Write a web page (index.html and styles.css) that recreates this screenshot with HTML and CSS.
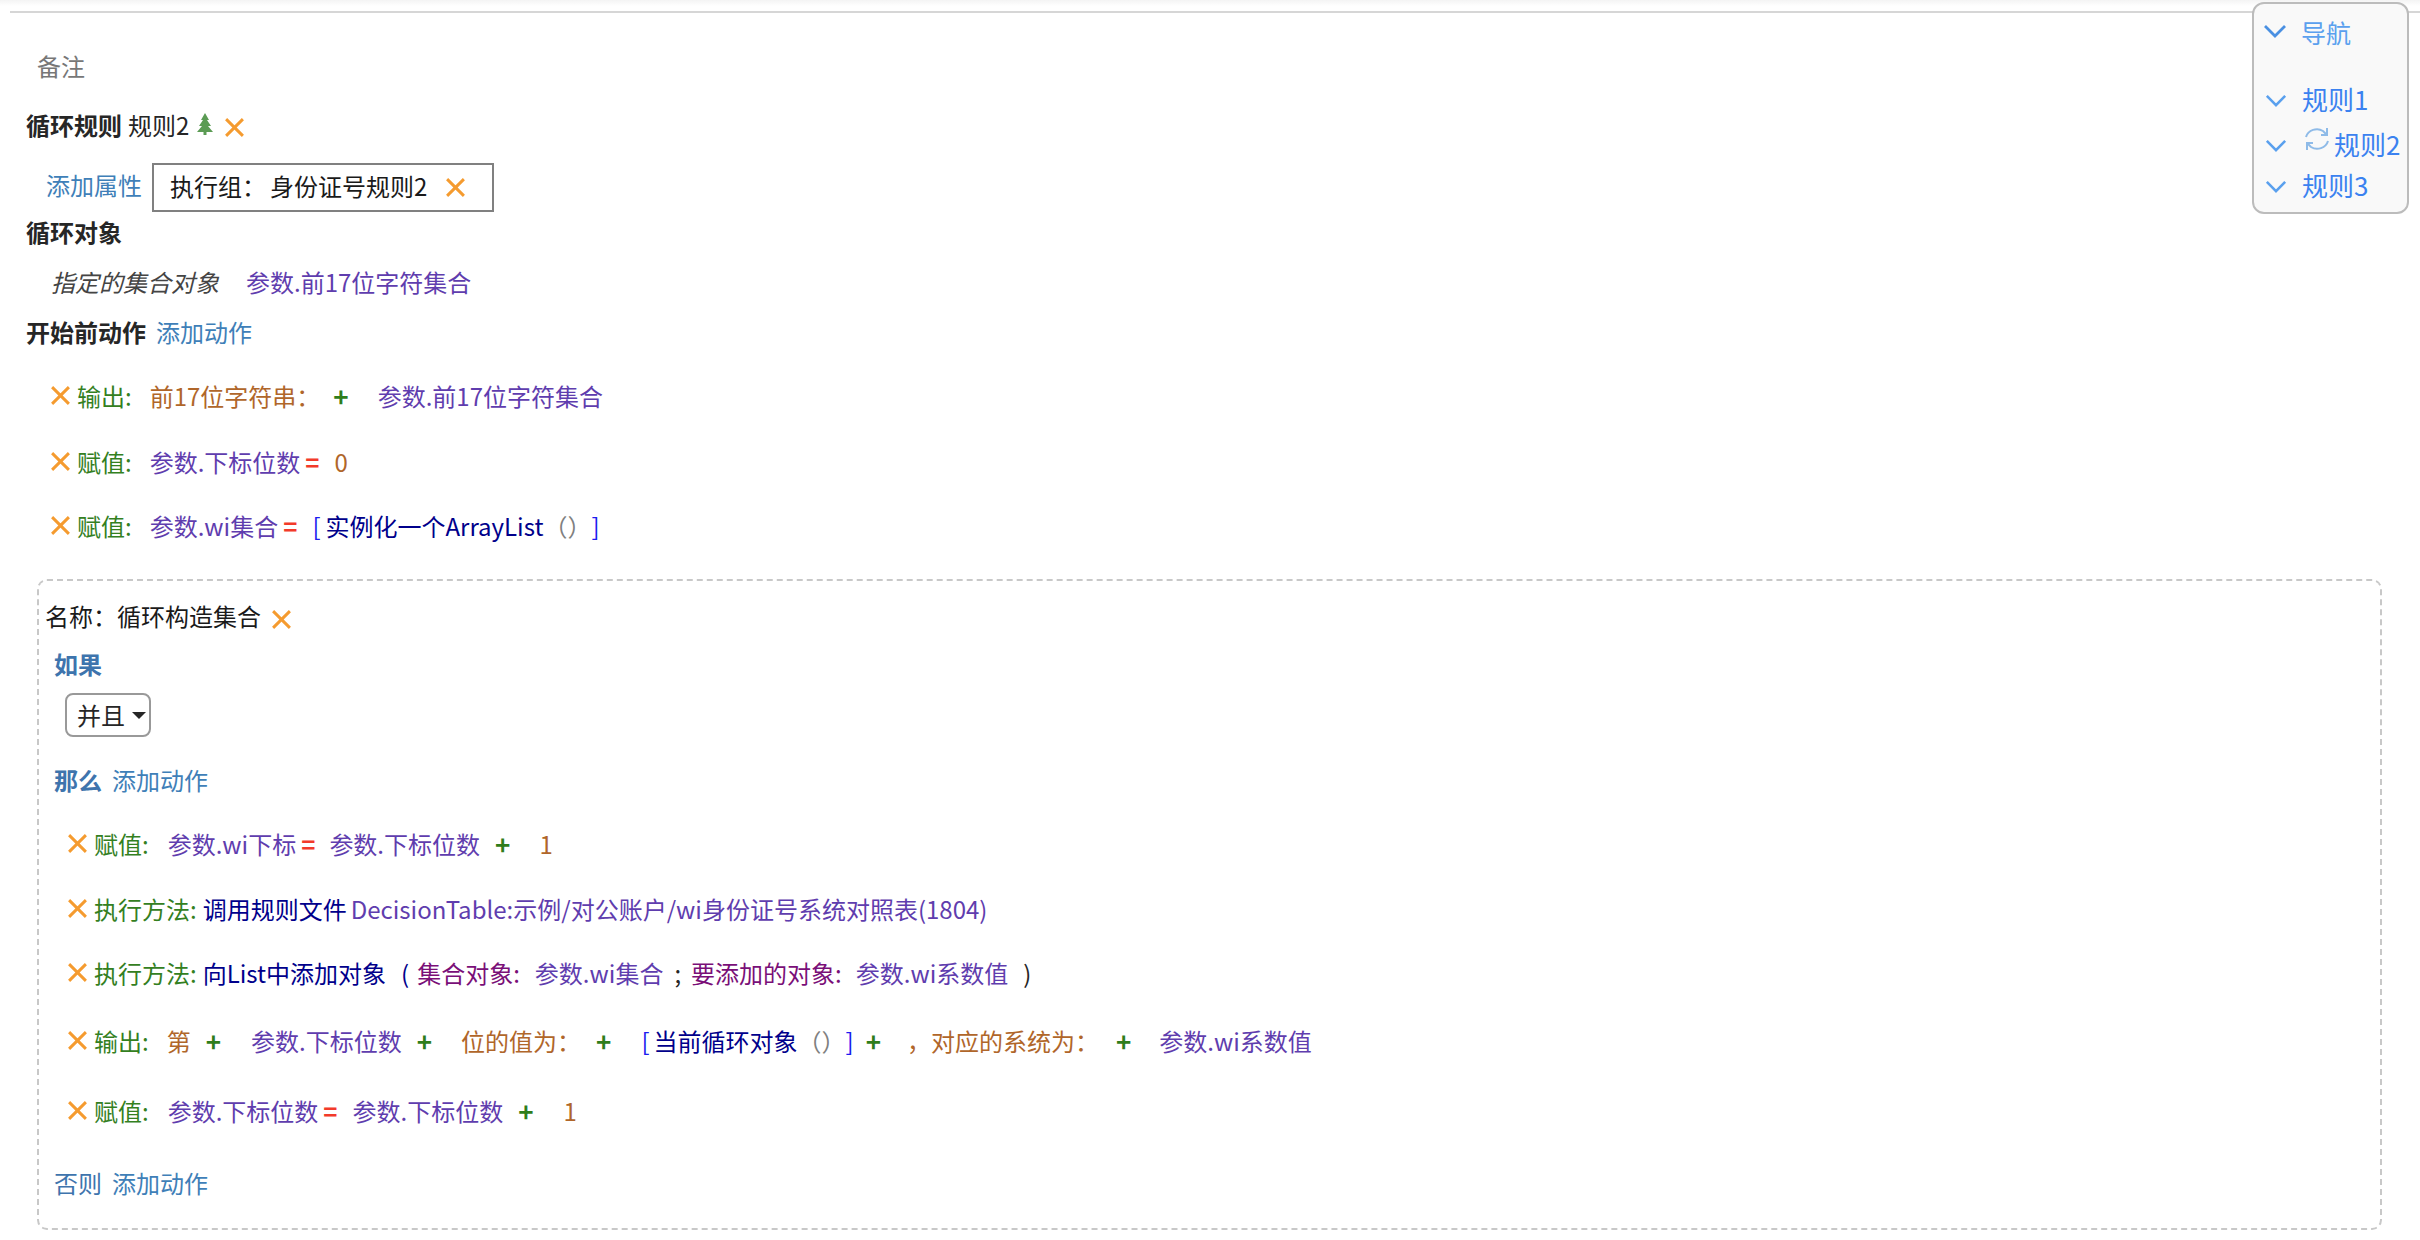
FILE: index.html
```html
<!DOCTYPE html>
<html lang="zh-CN">
<head>
<meta charset="utf-8">
<title>循环规则</title>
<link rel="stylesheet" href="styles.css">
</head>
<body>
<svg class="defs" width="0" height="0" aria-hidden="true">
  <symbol id="x" viewBox="0 0 20 18"><path d="M2 1 18 17M18 1 2 17" fill="none" stroke="currentColor" stroke-width="2.8"/></symbol>
  <symbol id="chev" viewBox="0 0 24 14"><path d="M2 2 12 12 22 2" fill="none" stroke="currentColor" stroke-width="2.8"/></symbol>
</svg>
<div class="topshade"></div>
<div class="rule"></div>
<nav class="nav">
  <div class="nav-head"><svg class="chev-l"><use href="#chev"/></svg><span>导航</span></div>
  <div class="nav-item first"><svg class="chev"><use href="#chev"/></svg><span>规则1</span></div>
  <div class="nav-item second"><svg class="chev"><use href="#chev"/></svg>
    <svg class="sync" viewBox="0 0 26 26"><path d="M2 11C4 4 13 1 19 5L23 9M23 2V9H17M24 15C22 22 13 25 7 21L3 17M3 24V17H9" fill="none" stroke="#8fbbe8" stroke-width="2"/></svg>
    <span>规则2</span></div>
  <div class="nav-item third"><svg class="chev"><use href="#chev"/></svg><span>规则3</span></div>
</nav>
<main class="page">
  <div class="row note">备注</div>
  <div class="row title"><b>循环规则</b><span class="ml6">规则2</span>
    <svg class="tree" viewBox="0 0 18 22"><path d="M9 0 13 7H11L15 13H12L17 19H10.500V22H7.500V19H1L6 13H3L7 7H5Z" fill="#5b9b54"/></svg>
    <svg class="x title-x"><use href="#x"/></svg></div>
  <div class="row attrs"><a class="link attr-link">添加属性</a>
    <div class="attr-box"><span>执行组：</span><span class="ml4">身份证号规则2</span><svg class="x ml18"><use href="#x"/></svg></div></div>
  <div class="row loop-obj"><b>循环对象</b></div>
  <div class="row target"><i class="hint">指定的集合对象</i><span class="var ml27">参数.前17位字符集合</span></div>
  <div class="row before"><b>开始前动作</b><a class="link ml10">添加动作</a></div>

  <div class="row act a30"><svg class="x"><use href="#x"/></svg><span class="kw">输出:</span><span class="str ml18">前17位字符串：</span><span class="op ml13">+</span><span class="var ml29">参数.前17位字符集合</span></div>
  <div class="row act a32"><svg class="x"><use href="#x"/></svg><span class="kw">赋值:</span><span class="var ml18">参数.下标位数</span><span class="eq">=</span><span class="str ml15">0</span></div>
  <div class="row act a30"><svg class="x"><use href="#x"/></svg><span class="kw">赋值:</span><span class="var ml18">参数.wi集合</span><span class="eq">=</span><span class="br ml15">[</span><span class="fn ml5">实例化一个ArrayList</span><span class="par">（）</span><span class="br">]</span></div>

  <section class="loop">
    <div class="row name">名称：循环构造集合<svg class="x ml10"><use href="#x"/></svg></div>
    <div class="sub">
      <div class="row if"><b class="blue">如果</b></div>
      <div class="select"><span>并且</span><span class="caret"></span></div>
      <div class="row then"><b class="blue">那么</b><a class="link ml10">添加动作</a></div>
      <div class="actions">
        <div class="row act a30"><svg class="x"><use href="#x"/></svg><span class="kw">赋值:</span><span class="var ml19">参数.wi下标</span><span class="eq">=</span><span class="var ml14">参数.下标位数</span><span class="op ml15">+</span><span class="str ml29">1</span></div>
        <div class="row act a31"><svg class="x"><use href="#x"/></svg><span class="kw">执行方法:</span><span class="fn ml6">调用规则文件</span><span class="var ml4">DecisionTable:示例/对公账户/wi身份证号系统对照表(1804)</span></div>
        <div class="row act a30"><svg class="x"><use href="#x"/></svg><span class="kw">执行方法:</span><span class="fn ml6">向List中添加对象</span><span class="fn ml15">(</span><span class="param ml8">集合对象:</span><span class="var ml15">参数.wi集合</span><span class="sep ml11">;</span><span class="param ml10">要添加的对象:</span><span class="var ml14">参数.wi系数值</span><span class="sep ml15">)</span></div>
        <div class="row act a34"><svg class="x"><use href="#x"/></svg><span class="kw">输出:</span><span class="str ml18">第</span><span class="op ml15">+</span><span class="var ml30">参数.下标位数</span><span class="op ml15">+</span><span class="str ml29">位的值为：</span><span class="op ml15">+</span><span class="br ml30">[</span><span class="fn ml4">当前循环对象</span><span class="par">（）</span><span class="br">]</span><span class="op ml12">+</span><span class="str ml26">，</span><span class="str">对应的系统为：</span><span class="op ml17">+</span><span class="var ml28">参数.wi系数值</span></div>
        <div class="row act a36"><svg class="x"><use href="#x"/></svg><span class="kw">赋值:</span><span class="var ml19">参数.下标位数</span><span class="eq">=</span><span class="var ml15">参数.下标位数</span><span class="op ml15">+</span><span class="str ml30">1</span></div>
      </div>
      <div class="row else"><span class="blue">否则</span><a class="link ml10">添加动作</a></div>
    </div>
  </section>
</main>
</body>
</html>
```
FILE: styles.css
```css
* { box-sizing: border-box; }
html, body { margin: 0; background: #fff; }
body {
  position: relative;
  width: 2420px;
  height: 1240px;
  overflow: hidden;
  font-family: "Noto Sans CJK SC", "Noto Sans", sans-serif;
  font-size: 24px;
  line-height: 34px;
  color: #262626;
}
.defs { position: absolute; }
.topshade { height: 6px; background: linear-gradient(#f4f4f4, #fff); }
.rule { height: 2px; margin: 5px 0 0 10px; background: #d6d6d6; }
.page { padding: 0 38px 0 26px; }
.row { display: flex; align-items: center; height: 34px; padding-bottom: 3px; white-space: nowrap; }
b { font-weight: 700; }
.x { width: 21px; height: 19px; color: #f59b2f; flex: none; }
.link { color: #3f7fb8; }
.blue { color: #3e74ad; }
.note { margin: 37px 0 0 11px; color: #777; }
.title { margin-top: 25px; }
.tree { width: 18px; height: 22px; margin: -1px 0 0 7px; }
.title-x { margin: 6px 0 0 10px; }
.attrs { height: 49px; margin-top: 20px; padding-bottom: 0; }
.attr-link { margin: 0 10px 6px 20px; }
.attr-box { display: flex; align-items: center; width: 342px; height: 49px; padding: 0 0 3px 16px; border: 2px solid #808080; color: #1a1a1a; }
.attr-box .x { margin-top: 2px; }
.loop-obj { margin-top: 4px; }
.target { margin: 16px 0 0 25px; }
.hint { color: #444; }
.before { margin-top: 16px; }
.act { padding-left: 24px; }
.act .x { margin: 0 6px 0 0; }
.a30 { margin-top: 30px; }
.a31 { margin-top: 31px; }
.a32 { margin-top: 32px; }
.a34 { margin-top: 34px; }
.a36 { margin-top: 36px; }
.kw { color: #34801f; }
.var { color: #5f3dae; }
.str { color: #b0662a; }
.op { color: #2f7d1b; font-size: 26px; font-weight: 700; }
.eq { color: #f23a2a; margin-left: 5px; font-weight: 700; }
.fn { color: #00008b; }
.br { color: #1c1cf0; }
.par { color: #808080; }
.param { color: #7a0f78; }
.sep { color: #262626; }
.ml4 { margin-left: 4px; }
.ml5 { margin-left: 5px; }
.ml6 { margin-left: 6px; }
.ml8 { margin-left: 8px; }
.ml10 { margin-left: 10px; }
.ml11 { margin-left: 11px; }
.ml12 { margin-left: 12px; }
.ml13 { margin-left: 13px; }
.ml14 { margin-left: 14px; }
.ml15 { margin-left: 15px; }
.ml17 { margin-left: 17px; }
.ml18 { margin-left: 18px; }
.ml19 { margin-left: 19px; }
.ml26 { margin-left: 26px; }
.ml27 { margin-left: 27px; }
.ml28 { margin-left: 28px; }
.ml29 { margin-left: 29px; }
.ml30 { margin-left: 30px; }
.loop {
  height: 651px;
  margin: 35px 0 0 11px;
  padding: 18px 0 0 6px;
  border: 2px dashed #c8c8c8;
  border-radius: 10px;
}
.name { color: #1a1a1a; padding-bottom: 0; }
.name .x { margin-top: 7px; }
.sub { padding-left: 9px; }
.if { margin-top: 14px; padding-bottom: 0; }
.select {
  display: flex;
  align-items: center;
  width: 86px;
  height: 44px;
  margin: 12px 0 0 11px;
  padding-left: 10px;
  border: 2px solid #999;
  border-radius: 8px;
  color: #262626;
}
.caret {
  width: 0;
  height: 0;
  margin: 0 0 0 7px;
  border-left: 7px solid transparent;
  border-right: 7px solid transparent;
  border-top: 7px solid #262626;
}
.then { margin-top: 27px; }
.actions .act { padding-left: 13px; }
.else { margin-top: 38px; }
.nav {
  position: absolute;
  top: 2px;
  left: 2252px;
  width: 157px;
  height: 212px;
  padding: 12px 0 0 8px;
  background: #f9f9f9;
  border: 2px solid #bcbcbc;
  border-radius: 12px;
}
.nav-head { display: flex; align-items: center; height: 34px; padding-bottom: 3px; color: #5aa0ee; font-size: 25px; }
.nav-head span { margin-left: 13px; }
.chev-l { width: 26px; height: 14px; margin-top: -2px; color: #4a90e2; }
.nav-item { display: flex; align-items: center; height: 34px; padding-bottom: 2px; color: #3b82f0; font-size: 26px; }
.chev { width: 22px; height: 13px; margin: 2px 0 0 3px; color: #5aa0ee; }
.nav-item span { margin-left: 15px; }
.first { margin-top: 33px; }
.second { margin-top: 11px; }
.third { margin-top: 7px; }
.second .sync { width: 26px; height: 26px; margin: -10px 0 0 17px; }
.second span { margin-left: 4px; }
```
